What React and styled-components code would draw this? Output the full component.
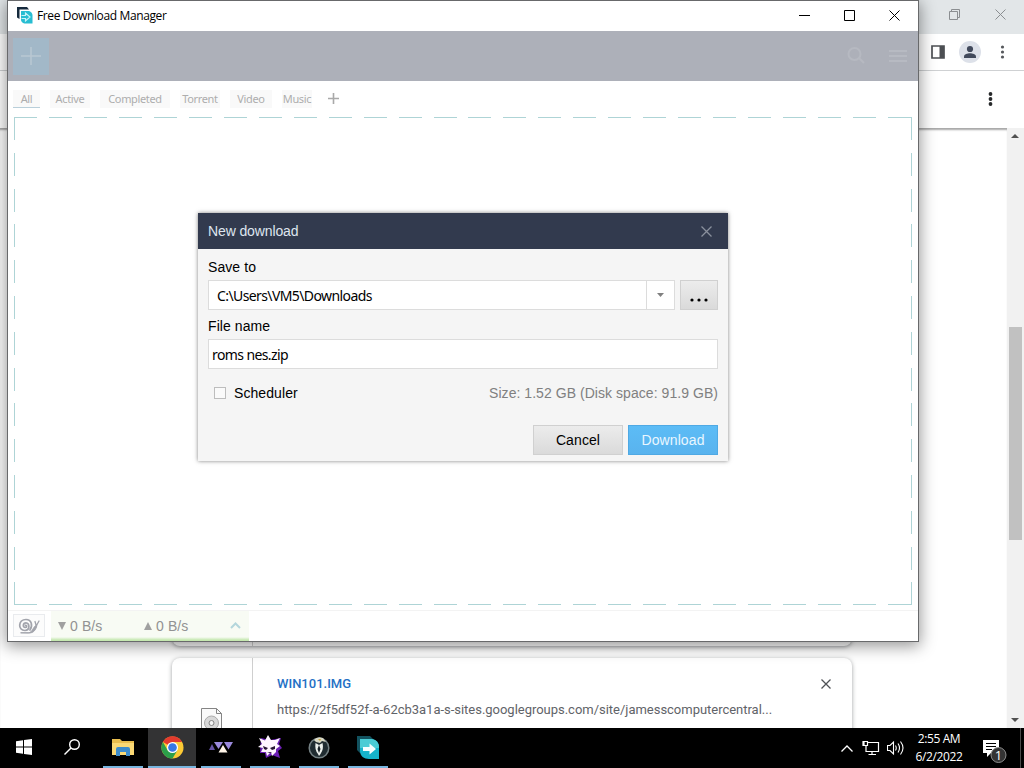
import React from 'react';
import styled, { createGlobalStyle } from 'styled-components';

const GlobalStyle = createGlobalStyle`
	* {
		box-sizing: border-box;
	}
	body {
		margin: 0;
		overflow: hidden;
		font-family: 'Liberation Sans', Arial, sans-serif;
	}
	svg {
		display: block;
		flex: none;
	}
`;

const Desktop = styled.div`
	position: relative;
	width: 1024px;
	height: 768px;
	display: flex;
	flex-direction: column;
	overflow: hidden;
	background: #fff;
`;

/* ---- browser behind ---- */
const Browser = styled.div`
	flex: 1;
	min-height: 0;
	display: flex;
	flex-direction: column;
`;
const BrowserTitle = styled.div`
	height: 34px;
	flex: none;
	display: flex;
	justify-content: flex-end;
	align-items: center;
	gap: 35px;
	padding: 0 18px 6px 0;
	background: #e2e6e8;
`;
const BrowserToolbar = styled.div`
	height: 37px;
	flex: none;
	display: flex;
	justify-content: flex-end;
	align-items: center;
	gap: 14px;
	padding-right: 18px;
	border-bottom: 1px solid #cfd1d3;
	background: #fff;
`;
const Avatar = styled.div`
	width: 22px;
	height: 22px;
	border-radius: 50%;
	background: #dde1e9;
`;
const PageHeader = styled.div`
	height: 57px;
	flex: none;
	display: flex;
	justify-content: flex-end;
	align-items: center;
	padding: 0 31px 2px 0;
	background: #fff;
`;
const PageBody = styled.div`
	flex: 1;
	min-height: 0;
	display: flex;
`;
const DownloadList = styled.div`
	flex: 1;
	padding: 0 0 0 172px;
	overflow: hidden;
	box-shadow: inset 0 3px 2px -1px rgba(0, 0, 0, 0.35);
`;
const DownloadCard = styled.div`
	width: 680px;
	height: ${(props) => props.$height}px;
	margin-bottom: 12px;
	display: flex;
	border-radius: 8px;
	background: #fff;
	box-shadow: 0 1px 4px rgba(60, 64, 67, 0.5);
`;
const CardIcon = styled.div`
	width: 81px;
	padding: 50px 0 0 29px;
	border-right: 1px solid #cfcfcf;
`;
const CardText = styled.div`
	flex: 1;
	padding: 17px 0 0 24px;
	font-family: Roboto, sans-serif;
	font-size: 13px;
	color: #5f6368;
`;
const CardTitle = styled.div`
	line-height: 18px;
	margin-bottom: 8px;
	font-weight: 500;
	color: #2470c5;
`;
const CardUrl = styled.div`
	line-height: 18px;
	letter-spacing: -0.02px;
	white-space: nowrap;
`;
const CardClose = styled.div`
	padding: 21px 21px 0 0;
`;
const Scrollbar = styled.div`
	width: 17px;
	display: flex;
	flex-direction: column;
	justify-content: space-between;
	align-items: center;
	padding: 6px 1px 6px 0;
	background: #f1f1f1;
`;
const ScrollThumb = styled.div`
	width: 13px;
	height: 213px;
	margin-top: 10px;
	background: #c1c1c1;
`;

/* ---- download manager window ---- */
const Window = styled.div`
	position: absolute;
	left: 7px;
	top: 0;
	width: 912px;
	height: 642px;
	display: flex;
	flex-direction: column;
	border: 1px solid #68696b;
	background: #fff;
	box-shadow: 0 3px 15px 1px rgba(0, 0, 0, 0.42);
`;
const TitleBar = styled.div`
	height: 30px;
	flex: none;
	display: flex;
	align-items: center;
	padding: 0 18px 2px 9px;
`;
const WindowTitle = styled.div`
	flex: 1;
	padding-left: 4px;
	font-family: 'Open Sans', sans-serif;
	font-size: 12px;
	letter-spacing: -0.37px;
	color: #000;
`;
const WindowButtons = styled.div`
	display: flex;
	align-items: center;
	gap: 34px;
`;
const Toolbar = styled.div`
	height: 50px;
	flex: none;
	display: flex;
	align-items: center;
	gap: 24px;
	padding: 0 11px 0 5px;
	background: #adb0b9;
`;
const AddButton = styled.div`
	width: 36px;
	height: 37px;
	margin-right: auto;
	display: flex;
	align-items: center;
	justify-content: center;
	background: #a2b8c8;
`;
const Tabs = styled.div`
	height: 36px;
	flex: none;
	display: flex;
	align-items: center;
	gap: 10px;
	padding: 0 0 1px 5px;
`;
const Tab = styled.div`
	width: ${(props) => props.$width}px;
	height: 18px;
	text-align: center;
	line-height: 17px;
	font-family: 'Noto Sans', sans-serif;
	font-size: 11px;
	letter-spacing: -0.35px;
	color: #adadad;
	background: #f9f9f9;
	border-bottom: 1px solid ${(props) => (props.$active ? '#b9cfda' : 'transparent')};
`;
const AddTab = styled.div`
	padding-left: 6px;
`;
const DropArea = styled.div`
	flex: 1;
	margin: 0 6px 5px;
	background-image: repeating-linear-gradient(to right, #aed4d6 0 23px, transparent 23px 34.96px),
		repeating-linear-gradient(to right, #aed4d6 0 23px, transparent 23px 34.96px),
		repeating-linear-gradient(to bottom, #aed4d6 0 23px, transparent 23px 35.8px),
		repeating-linear-gradient(to bottom, #aed4d6 0 23px, transparent 23px 35.8px);
	background-size: 100% 1px, 100% 1px, 1px 100%, 1px 100%;
	background-position: top, bottom, left, right;
	background-repeat: no-repeat;
`;
const StatusBar = styled.div`
	height: 31px;
	flex: none;
	display: flex;
	align-items: flex-end;
	gap: 6px;
	padding-left: 5px;
	border-top: 1px solid #f3f3f3;
`;
const SnailButton = styled.div`
	width: 32px;
	height: 23px;
	margin-bottom: 4px;
	display: flex;
	align-items: center;
	justify-content: center;
	border: 1px solid #e9ebee;
	background: #fcfcfc;
`;
const SpeedPanel = styled.div`
	width: 198px;
	height: 30px;
	display: flex;
	align-items: center;
	padding: 0 8px 1px 7px;
	font-size: 14px;
	color: #929292;
	background: linear-gradient(#f8fbf4 0 26px, #c5e8b0 29px);
`;
const Speed = styled.div`
	width: 87px;
	display: flex;
	align-items: center;
	gap: 4px;
	letter-spacing: 0.1px;
`;

/* ---- new download dialog ---- */
const Dialog = styled.div`
	position: absolute;
	left: 190px;
	top: 212px;
	width: 530px;
	height: 248px;
	display: flex;
	flex-direction: column;
	background: #f5f5f5;
	box-shadow: 0 0 4px rgba(0, 0, 0, 0.5);
	font-size: 14px;
	color: #000;
`;
const DialogHeader = styled.div`
	height: 36px;
	flex: none;
	display: flex;
	align-items: center;
	justify-content: space-between;
	padding: 0 16px 0 10px;
	letter-spacing: -0.12px;
	color: #dfe5ef;
	background: #323a4e;
`;
const DialogBody = styled.div`
	flex: 1;
	display: flex;
	flex-direction: column;
	padding: 9px 10px 6px;
`;
const Label = styled.label`
	height: 18px;
	line-height: 18px;
	margin-bottom: 4px;
	letter-spacing: 0.08px;
`;
const Field = styled.div`
	height: 30px;
	display: flex;
	margin-bottom: 7px;
`;
const Input = styled.div`
	flex: 1;
	padding-left: ${(props) => props.$pad}px;
	line-height: 29px;
	font-family: 'Noto Sans', sans-serif;
	font-size: 14px;
	letter-spacing: -0.6px;
	border: 1px solid #dcdcdc;
	background: #fff;
`;
const DropButton = styled.div`
	width: 29px;
	margin-left: -1px;
	display: flex;
	align-items: center;
	justify-content: center;
	border: 1px solid #dcdcdc;
	background: #fff;
`;
const Button = styled.div`
	width: ${(props) => props.$width}px;
	height: 30px;
	margin-left: 5px;
	padding-top: ${(props) => props.$drop || 0}px;
	display: flex;
	align-items: center;
	justify-content: center;
	letter-spacing: 0.1px;
	color: ${(props) => (props.$primary ? '#e9f6ff' : '#000')};
	border: 1px solid ${(props) => (props.$primary ? '#4fa9e4' : '#d0d0d0')};
	background: ${(props) => (props.$primary ? 'linear-gradient(#5cbcf6, #59b3ee)' : 'linear-gradient(#ececec, #dadada)')};
`;
const OptionsRow = styled.div`
	height: 20px;
	margin-top: 7px;
	display: flex;
	align-items: center;
	padding-left: 6px;
	letter-spacing: 0.08px;
`;
const Checkbox = styled.div`
	width: 12px;
	height: 12px;
	margin-right: 8px;
	border: 1px solid #bdbdbd;
	background: #fafafa;
`;
const SizeInfo = styled.div`
	margin-left: auto;
	letter-spacing: 0.05px;
	color: #808080;
`;
const Actions = styled.div`
	display: flex;
	justify-content: flex-end;
	margin-top: auto;
`;

/* ---- taskbar ---- */
const Taskbar = styled.div`
	height: 40px;
	flex: none;
	display: flex;
	align-items: stretch;
	color: #fff;
	background: #000;
`;
const TaskItem = styled.div`
	width: ${(props) => (props.$active ? 48 : 40)}px;
	margin: ${(props) => (props.$active ? '0 1px 0 0' : '0 5px 0 4px')};
	display: flex;
	align-items: center;
	justify-content: center;
	border-bottom: 2px solid ${(props) => (props.$open ? '#78b5df' : 'transparent')};
	background: ${(props) => (props.$active ? '#333334' : 'transparent')};

	&:nth-child(2) {
		padding-right: 3px;
	}
	&:nth-child(3) {
		margin-left: 5px;
	}
`;
const Tray = styled.div`
	margin-left: auto;
	display: flex;
	align-items: center;
	padding-right: 12px;
`;
const Speaker = styled.div`
	margin-left: -3px;
`;
const Clock = styled.div`
	width: 50px;
	margin: 0 18px 0 10px;
	white-space: nowrap;
	font-family: 'Open Sans', sans-serif;
	font-size: 12px;
	line-height: 18px;
	letter-spacing: -0.4px;
	display: flex;
	flex-direction: column;
	align-items: center;
`;
const Notifications = styled.div`
	padding-top: 5px;
`;
const ShowDesktop = styled.div`
	width: 4px;
	border-left: 1px solid #4a4a4a;
`;

const Cross = ({ size, color, width = 1 }) => (
	<svg width={size} height={size} viewBox={`0 0 ${size} ${size}`}>
		<path d={`M.5 .5L${size - 0.5} ${size - 0.5}M${size - 0.5} .5L.5 ${size - 0.5}`} stroke={color} strokeWidth={width} />
	</svg>
);
const Dots = ({ color, radius = 1.7 }) => (
	<svg width='5' height='14' viewBox='0 0 5 14' fill={color}>
		<circle cx='2.5' cy='2' r={radius} />
		<circle cx='2.5' cy='7' r={radius} />
		<circle cx='2.5' cy='12' r={radius} />
	</svg>
);
const Triangle = ({ up, width = 8, height = 4, color }) => (
	<svg width={width} height={height} viewBox='0 0 8 8' preserveAspectRatio='none'>
		<path d={up ? 'M0 8L4 0L8 8Z' : 'M0 0H8L4 8Z'} fill={color} />
	</svg>
);
const SmallLogo = () => (
	<svg width='16' height='17' viewBox='0 0 16 17'>
		<path d='M0 0H10L12 2.500H2.500V12L0 10.500Z' fill='#15293c' />
		<path d='M4 4H12Q15.500 5 15.500 8.500V16.500H7.500Q4 15.500 4 12.500Z' fill='#27bdd2' />
		<path d='M4.500 8.500H8.500V6L13 10L8.500 14V11.500H4.500' fill='none' stroke='#c8f3f8' strokeWidth='1.200' />
	</svg>
);
const TaskbarLogo = () => (
	<svg width='23' height='23' viewBox='0 0 23 23'>
		<path d='M0 0H13L17 4V7H5V17H3L0 14Z' fill='#12525f' />
		<path d='M3 3H14C19 3 22 7 22 11V23H12C7 23 3 20 3 15Z' fill='#16b3cb' />
		<path d='M3 3H14C19 3 22 7 22 11V12H3Z' fill='#4accd5' />
		<path d='M6 11H12.500V7.500L19 13L12.500 18.500V15H6Z' fill='#f4feff' />
	</svg>
);

function BrowserWindow() {
	return (
		<Browser>
			<BrowserTitle>
				<svg width='11' height='11' viewBox='0 0 11 11' fill='none' stroke='#8b8e91'>
					<path d='M.5 2.500H8.500V10.500H.5ZM2.500 2.500V.5H10.500V8.500H8.500' />
				</svg>
				<Cross size={11} color='#8b8e91' />
			</BrowserTitle>
			<BrowserToolbar>
				<svg width='14' height='14' viewBox='0 0 14 14'>
					<path d='M1 1H13V13H1Z' fill='#fff' stroke='#4c4f53' strokeWidth='1.700' />
					<path d='M8.500 1H13V13H8.500Z' fill='#4c4f53' />
				</svg>
				<Avatar>
					<svg width='22' height='22' viewBox='0 0 22 22' fill='#424a5c'>
						<circle cx='11' cy='8' r='3.100' />
						<path d='M5 17V15.500C5 13 8.500 12.200 11 12.200S17 13 17 15.500V17Z' />
					</svg>
				</Avatar>
				<svg width='11' height='14' viewBox='-4 0 11 14' fill='#55585c'>
					<circle cx='3.5' cy='2' r='1.600' />
					<circle cx='3.5' cy='7' r='1.600' />
					<circle cx='3.5' cy='12' r='1.600' />
				</svg>
			</BrowserToolbar>
			<PageHeader>
				<Dots color='#27292b' radius={1.9} />
			</PageHeader>
			<PageBody>
				<DownloadList>
					<DownloadCard $height={518}>
						<CardIcon />
					</DownloadCard>
					<DownloadCard $height={120}>
						<CardIcon>
							<svg width='21' height='26' viewBox='0 0 21 26' fill='none' stroke='#858585'>
								<path d='M.5 .5H15.500L20.500 5.500V25.500H.5Z' fill='#fafafa' />
								<path d='M15.500 .5V5.500H20.500' />
								<circle cx='10.500' cy='15' r='7' fill='#d8d8d8' stroke='#aaa' />
								<circle cx='10.500' cy='15' r='2.500' fill='#f5f5f5' />
							</svg>
						</CardIcon>
						<CardText>
							<CardTitle>WIN101.IMG</CardTitle>
							<CardUrl>https://2f5df52f-a-62cb3a1a-s-sites.googlegroups.com/site/jamesscomputercentral...</CardUrl>
						</CardText>
						<CardClose>
							<Cross size={10} color='#4f5256' width={1.3} />
						</CardClose>
					</DownloadCard>
				</DownloadList>
				<Scrollbar>
					<Triangle up color='#505050' width={8} />
					<ScrollThumb />
					<Triangle color='#505050' width={8} />
				</Scrollbar>
			</PageBody>
		</Browser>
	);
}

function NewDownloadDialog() {
	return (
		<Dialog>
			<DialogHeader>
				New download
				<Cross size={11} color='#8a909d' width={1.3} />
			</DialogHeader>
			<DialogBody>
				<Label>Save to</Label>
				<Field>
					<Input $pad={8}>C:\Users\VM5\Downloads</Input>
					<DropButton>
						<Triangle color='#808080' width={7} />
					</DropButton>
					<Button $width={38} $drop={10}>
						<svg width='18' height='4' viewBox='0 0 18 4'>
							<circle cx='2' cy='2' r='1.600' />
							<circle cx='9' cy='2' r='1.600' />
							<circle cx='16' cy='2' r='1.600' />
						</svg>
					</Button>
				</Field>
				<Label>File name</Label>
				<Field>
					<Input $pad={3}>roms nes.zip</Input>
				</Field>
				<OptionsRow>
					<Checkbox />
					Scheduler
					<SizeInfo>Size: 1.52 GB (Disk space: 91.9 GB)</SizeInfo>
				</OptionsRow>
				<Actions>
					<Button $width={90}>Cancel</Button>
					<Button $width={90} $primary>
						Download
					</Button>
				</Actions>
			</DialogBody>
		</Dialog>
	);
}

function DownloadManager() {
	return (
		<Window>
			<TitleBar>
				<SmallLogo />
				<WindowTitle>Free Download Manager</WindowTitle>
				<WindowButtons>
					<svg width='11' height='11' viewBox='0 0 11 11'>
						<path d='M0 5.500H11' stroke='#000' />
					</svg>
					<svg width='11' height='11' viewBox='0 0 11 11'>
						<path d='M.5 .5H10.500V10.500H.5Z' fill='none' stroke='#000' />
					</svg>
					<Cross size={11} color='#000' />
				</WindowButtons>
			</TitleBar>
			<Toolbar>
				<AddButton>
					<svg width='20' height='18' viewBox='0 0 20 18'>
						<path d='M0 9H20M10 0V18' stroke='#b9c7d2' strokeWidth='1.500' />
					</svg>
				</AddButton>
				<svg width='18' height='18' viewBox='0 0 18 18' fill='none' stroke='#b6b9c1' strokeWidth='2'>
					<circle cx='7.500' cy='7' r='6' />
					<path d='M12 11L17 16' />
				</svg>
				<svg width='18' height='14' viewBox='0 0 18 14' stroke='#babdc5' strokeWidth='1.500'>
					<path d='M0 2H18M0 7H18M0 12H18' />
				</svg>
			</Toolbar>
			<Tabs>
				<Tab $width={27} $active>
					All
				</Tab>
				<Tab $width={40}>Active</Tab>
				<Tab $width={70}>Completed</Tab>
				<Tab $width={40}>Torrent</Tab>
				<Tab $width={42}>Video</Tab>
				<Tab $width={30}>Music</Tab>
				<AddTab>
					<svg width='11' height='11' viewBox='0 0 11 11'>
						<path d='M0 5.500H11M5.500 0V11' stroke='#a9a9a9' strokeWidth='1.600' />
					</svg>
				</AddTab>
			</Tabs>
			<DropArea />
			<StatusBar>
				<SnailButton>
					<svg width='22' height='16' viewBox='0 0 22 16' fill='none' stroke='#a2a4ac' strokeWidth='1.700' strokeLinecap='round'>
						<path d='M7.500 7.300C9.200 7 9 9.500 7.200 9.500C4.500 9.500 4.700 4.800 8 4.800C12 4.800 12 12.500 7 12.500C-.5 12.500 0 1.500 8 1.500C13.500 1.500 15 7.500 12 12' />
						<path d='M3 14.800H11C14 14.500 15 9 19 6.500L18.500 9C17 13 15 15 11 15Z' fill='#a2a4ac' strokeWidth='1' />
						<path d='M17 3.500L18 7M21 3L19 6.500' strokeWidth='1.300' />
					</svg>
				</SnailButton>
				<SpeedPanel>
					<Speed>
						<Triangle color='#a0a0a0' height={8} />0 B/s
					</Speed>
					<Speed>
						<Triangle up color='#a0a0a0' height={8} />0 B/s
					</Speed>
					<svg width='11' height='7' viewBox='0 0 11 7' fill='none'>
						<path d='M1 6L5.500 1.500L10 6' stroke='#b4d6dc' strokeWidth='2' />
					</svg>
				</SpeedPanel>
			</StatusBar>
			<NewDownloadDialog />
		</Window>
	);
}

function TaskbarRow() {
	return (
		<Taskbar>
			<TaskItem>
				<svg width='16' height='16' viewBox='0 0 16 16' fill='#fff'>
					<path d='M0 2.200L7 1.200V7.500H0ZM8 1L16 0V7.500H8ZM0 8.500H7V14.800L0 13.800ZM8 8.500H16V16L8 15Z' />
				</svg>
			</TaskItem>
			<TaskItem>
				<svg width='16' height='16' viewBox='0 0 16 16' fill='none' stroke='#fff' strokeWidth='1.400'>
					<circle cx='10.500' cy='5.500' r='4.800' />
					<path d='M7 9L.5 15.500' />
				</svg>
			</TaskItem>
			<TaskItem $open>
				<svg width='22' height='19' viewBox='0 0 22 19'>
					<path d='M0 1H8L10 3H22V17H0Z' fill='#e9bd4e' />
					<path d='M0 5H22V17H0Z' fill='#fbd975' />
					<path d='M4 18V11Q4 9 6 9H16Q18 9 18 11V18H14V14H8V18Z' fill='#3d8ccc' />
				</svg>
			</TaskItem>
			<TaskItem $open $active>
				<svg width='23' height='23' viewBox='0 0 24 24'>
					<circle cx='12' cy='12' r='11.500' fill='#fcc934' />
					<path d='M12 12L2 6.200A11.500 11.500 0 0 1 22 6.200H12Z' fill='#e33b2e' />
					<path d='M12 12L7 15L2 6.200A11.500 11.500 0 0 0 12 23.500L17 15Z' fill='#2b9f4a' />
					<circle cx='12' cy='12' r='5.800' fill='#fff' />
					<circle cx='12' cy='12' r='4.500' fill='#3878e4' />
				</svg>
			</TaskItem>
			<TaskItem $open>
				<svg width='24' height='12' viewBox='0 0 24 12'>
					<path d='M5 1H14L9.500 8Z' fill='#9a89dc' />
					<path d='M15 1H24L19.500 8.500Z' fill='#9a89dc' />
					<path d='M0 9L3 3L6 9Z' fill='#6653a5' />
					<path d='M9.500 11.500L14 4L18.500 11.500Z' fill='#fff5e8' />
				</svg>
			</TaskItem>
			<TaskItem $open>
				<svg width='24' height='24' viewBox='0 0 24 24'>
					<path d='M3 3L12 5L23 3L21 9L24 13L20 16L22 23L14 20L8 23L7 18L2 18Z' fill='#6c1fb5' />
					<path d='M1 3L7 5.500L10 0L13 5L17 5L22 3L19 9L22 11L18 14L18 17L14 21L13 17L9 21L8 17L3 17L5 13L0 12L4 9Z' fill='#fff6ff' />
					<path d='M5 11L10 13L8 15L6 14ZM17 11L12 13L14 15L17 14ZM9 17H14L12 18Z' fill='#261333' />
				</svg>
			</TaskItem>
			<TaskItem $open>
				<svg width='22' height='23' viewBox='0 0 22 23'>
					<circle cx='11' cy='12' r='9.800' fill='#202c31' stroke='#748083' strokeWidth='1.500' />
					<path d='M6 4Q9 0 15 2L18 6L14 5L12 7L8 6Z' fill='#d8d8c5' />
					<path d='M7.500 7Q6.500 14 10 18L11 20L12.500 18Q16 13 14.500 7L11 9Z' fill='#edf1ed' />
					<path d='M11 9L9.500 13L11 17L12.500 13Z' fill='#182127' />
					<path d='M10 3L13 3L12 5Z' fill='#c4a43d' />
				</svg>
			</TaskItem>
			<TaskItem $open>
				<TaskbarLogo />
			</TaskItem>
			<Tray>
				<svg width='12' height='7' viewBox='0 0 12 7' fill='none' stroke='#fff' strokeWidth='1.300'>
					<path d='M.5 6.500L6 1L11.500 6.500' />
				</svg>
				<svg width='37' height='16' viewBox='-10 0 37 16' fill='none' stroke='#fff' strokeWidth='1.200'>
					<path d='M5 2.500H15.500V11.500H3V6M9 11.500V14.500M5.500 14.500H13M0 1.500H4.500V5.500H0ZM1 1V6' />
				</svg>
				<Speaker>
					<svg width='17' height='16' viewBox='0 0 17 16' fill='none' stroke='#fff' strokeWidth='1.100'>
						<path d='M.5 5.500H3L6.500 2V14L3 10.500H.5ZM8.500 5.500Q10 8 8.500 10.500M11 3.500Q14 8 11 12.500M13.500 1.500Q18.500 8 13.500 14.500' />
					</svg>
				</Speaker>
				<Clock>
					<span>2:55 AM</span>
					<span>6/2/2022</span>
				</Clock>
				<Notifications>
					<svg width='26' height='26' viewBox='0 0 26 26'>
						<path d='M1 2H17V15H9L5 19V15H1Z' fill='#fff' />
						<path d='M4 5.500H14M4 8.500H14M4 11.500H10' stroke='#000' />
						<circle cx='16.500' cy='17' r='7.500' fill='#343434' stroke='#8d8d8d' />
						<text x='16.500' y='21.500' textAnchor='middle' fill='#fff' fontSize='13' fontFamily='Open Sans'>
							1
						</text>
					</svg>
				</Notifications>
			</Tray>
			<ShowDesktop />
		</Taskbar>
	);
}

export default function App() {
	return (
		<>
			<GlobalStyle />
			<Desktop>
				<BrowserWindow />
				<DownloadManager />
				<TaskbarRow />
			</Desktop>
		</>
	);
}
